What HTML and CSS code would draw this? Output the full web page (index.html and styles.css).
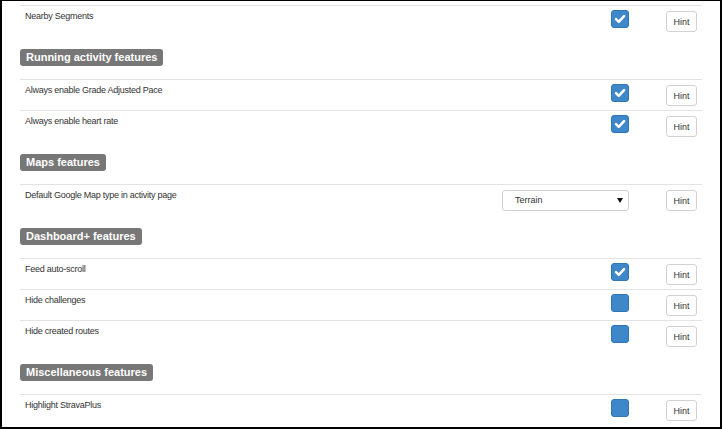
FILE: index.html
```html
<!DOCTYPE html>
<html>
<head>
	<meta charset="utf-8">
	<title>Settings</title>
	<link rel="stylesheet" href="styles.css">
</head>
<body>
	<div class="frame">
		<div class="options">

			<div class="row">
				<div class="name">Nearby Segments</div>
				<div class="ctrl"><span class="check on"><svg viewBox="0 0 18 18"><path d="M4.5 9.2 L7.6 12.2 L13.6 5.8"/></svg></span></div>
				<div class="hint"><button class="btn">Hint</button></div>
			</div>

			<h3 class="section"><span class="label">Running activity features</span></h3>
			<div class="row">
				<div class="name">Always enable Grade Adjusted Pace</div>
				<div class="ctrl"><span class="check on"><svg viewBox="0 0 18 18"><path d="M4.5 9.2 L7.6 12.2 L13.6 5.8"/></svg></span></div>
				<div class="hint"><button class="btn">Hint</button></div>
			</div>
			<div class="row">
				<div class="name">Always enable heart rate</div>
				<div class="ctrl"><span class="check on"><svg viewBox="0 0 18 18"><path d="M4.5 9.2 L7.6 12.2 L13.6 5.8"/></svg></span></div>
				<div class="hint"><button class="btn">Hint</button></div>
			</div>

			<h3 class="section"><span class="label">Maps features</span></h3>
			<div class="row">
				<div class="name">Default Google Map type in activity page</div>
				<div class="ctrl"><span class="select">Terrain</span></div>
				<div class="hint"><button class="btn">Hint</button></div>
			</div>

			<h3 class="section"><span class="label">Dashboard+ features</span></h3>
			<div class="row">
				<div class="name">Feed auto-scroll</div>
				<div class="ctrl"><span class="check on"><svg viewBox="0 0 18 18"><path d="M4.5 9.2 L7.6 12.2 L13.6 5.8"/></svg></span></div>
				<div class="hint"><button class="btn">Hint</button></div>
			</div>
			<div class="row">
				<div class="name">Hide challenges</div>
				<div class="ctrl"><span class="check"></span></div>
				<div class="hint"><button class="btn">Hint</button></div>
			</div>
			<div class="row">
				<div class="name">Hide created routes</div>
				<div class="ctrl"><span class="check"></span></div>
				<div class="hint"><button class="btn">Hint</button></div>
			</div>

			<h3 class="section"><span class="label">Miscellaneous features</span></h3>
			<div class="row">
				<div class="name">Highlight StravaPlus</div>
				<div class="ctrl"><span class="check"></span></div>
				<div class="hint"><button class="btn">Hint</button></div>
			</div>

		</div>
	</div>
</body>
</html>
```

FILE: styles.css
```css
html, body {
	margin: 0;
	padding: 0;
	background: #fff;
}

.frame {
	box-sizing: border-box;
	width: 722px;
	height: 429px;
	border: 2px solid #000;
	border-top-width: 1px;
	padding: 4px 18px 0 18px;
	overflow: hidden;
	font-family: "Liberation Sans", Arial, sans-serif;
	color: #333;
}

/* one option line, like a bootstrap table row */
.row {
	display: flex;
	height: 31px;
	box-sizing: border-box;
	border-top: 1px solid #e3e3e3;
}

.name {
	flex: 1;
	padding: 3px 5px 0;
	font-size: 9px;
	line-height: 14px;
	letter-spacing: -0.25px;
}

.ctrl {
	display: flex;
	justify-content: flex-end;
	align-items: flex-start;
	padding-top: 4px;
}

.hint {
	width: 73px;
	display: flex;
	justify-content: flex-end;
	padding: 5px 5px 0 0;
	box-sizing: border-box;
}

.section {
	margin: 13px 0;
	font-size: 11px;
	line-height: 11px;
}

.label {
	display: inline-block;
	background: #777;
	color: #fff;
	font-weight: bold;
	padding: 3px 6px;
	border-radius: 3px;
}

.check {
	display: block;
	width: 18px;
	height: 18px;
	box-sizing: border-box;
	background: #3e87c9;
	border: 1px solid #2f76b7;
	border-radius: 3px;
}
.check svg {
	display: block;
	width: 16px;
	height: 16px;
	fill: none;
	stroke: #fff;
	stroke-width: 2.8;
	stroke-linecap: round;
	stroke-linejoin: round;
}

.btn {
	width: 31px;
	height: 21px;
	padding: 0;
	background: #fff;
	border: 1px solid #d2d2d2;
	border-radius: 3px;
	font-family: "Liberation Sans", Arial, sans-serif;
	font-size: 9px;
	color: #333;
}

.select {
	position: relative;
	display: block;
	width: 127px;
	height: 21px;
	box-sizing: border-box;
	margin-top: 1px;
	padding-left: 12px;
	border: 1px solid #d2d2d2;
	border-radius: 3px;
	font-size: 9px;
	line-height: 19px;
	color: #333;
}
.select::after {
	content: "";
	position: absolute;
	right: 5px;
	top: 7px;
	border-left: 3px solid transparent;
	border-right: 3px solid transparent;
	border-top: 5px solid #111;
}
```
